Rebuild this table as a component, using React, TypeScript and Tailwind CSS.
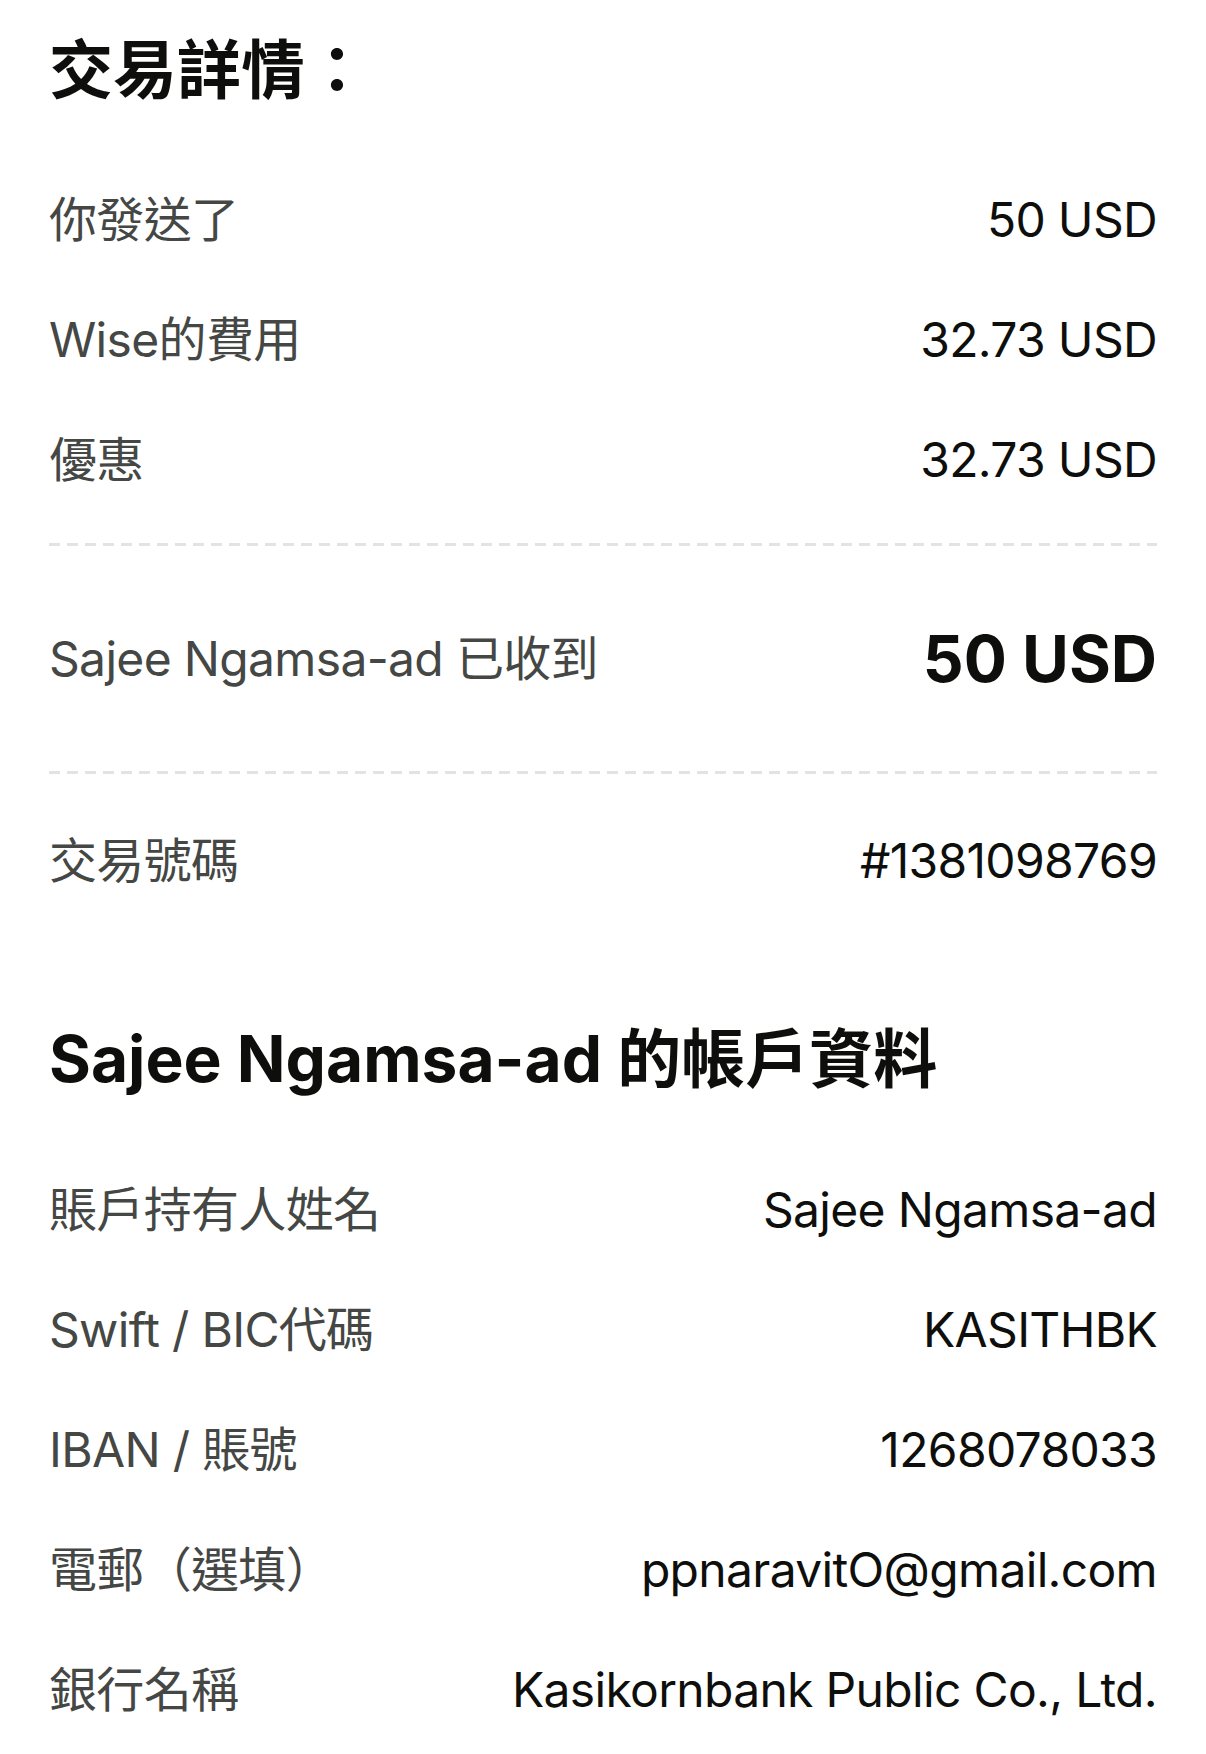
// App.tsx
type Row = { label: string; value: string };

const fees: Row[] = [
  { label: "你發送了", value: "50 USD" },
  { label: "Wise的費用", value: "32.73 USD" },
  { label: "優惠", value: "32.73 USD" },
];

const account: Row[] = [
  { label: "賬戶持有人姓名", value: "Sajee Ngamsa-ad" },
  { label: "Swift / BIC代碼", value: "KASITHBK" },
  { label: "IBAN / 賬號", value: "1268078033" },
  { label: "電郵（選填）", value: "ppnaravitO@gmail.com" },
  { label: "銀行名稱", value: "Kasikornbank Public Co., Ltd." },
];

const font = "font-['Inter','Noto_Sans_CJK_TC',sans-serif]";
const body = "text-[48px] leading-[58px] tracking-[-0.014em]";

function DetailRow({ label, value }: Row) {
  return (
    <div className="flex h-[120px] items-center justify-between">
      <span className={`${body} text-[#454745]`}>{label}</span>
      <span className={`${body} text-[#0e0f0c]`}>{value}</span>
    </div>
  );
}

function Dashed() {
  return <div className="h-[3px] w-full bg-[repeating-linear-gradient(90deg,#e3e3e3_0_11px,transparent_11px_18px)]" />;
}

export default function App() {
  return (
    <div className={`${font} min-h-[1754px] w-[1206px] bg-white px-[49px] pt-[32px] antialiased`}>
      {/* 交易詳情 */}
      <h1 className="h-[76px] text-[64px] leading-[76px] font-bold text-[#0e0f0c]">交易詳情：</h1>

      <div className="mt-[52px]">
        {fees.map((r) => (
          <DetailRow key={r.label} {...r} />
        ))}
      </div>

      <div className="mt-[23px]">
        <Dashed />
      </div>
      <div className="flex h-[225px] items-center justify-between">
        <span className={`${body} text-[#454745]`}>Sajee Ngamsa-ad 已收到</span>
        <span className="text-[64px] leading-[76px] font-bold text-[#0e0f0c]">50 USD</span>
      </div>
      <Dashed />

      <div className="mt-[27px]">
        <DetailRow label="交易號碼" value="#1381098769" />
      </div>

      {/* 帳戶資料 */}
      <h2 className="mt-[100px] h-[76px] text-[64px] leading-[76px] font-bold text-[#0e0f0c]">
        Sajee Ngamsa-ad 的帳戶資料
      </h2>

      <div className="mt-[53px]">
        {account.map((r) => (
          <DetailRow key={r.label} {...r} />
        ))}
      </div>
    </div>
  );
}
